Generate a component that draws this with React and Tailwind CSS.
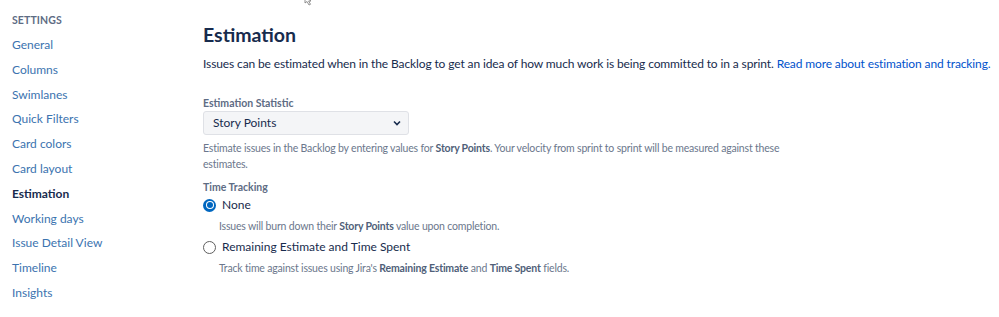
const navItems = [
  "General",
  "Columns",
  "Swimlanes",
  "Quick Filters",
  "Card colors",
  "Card layout",
  "Estimation",
  "Working days",
  "Issue Detail View",
  "Timeline",
  "Insights",
];

function Radio({ checked }) {
  return checked ? (
    <span className="w-[13px] h-[13px] rounded-full bg-[#0067c0] flex items-center justify-center shrink-0">
      <span className="w-[8px] h-[8px] rounded-full bg-white flex items-center justify-center">
        <span className="w-[6px] h-[6px] rounded-full bg-[#0067c0]" />
      </span>
    </span>
  ) : (
    <span className="w-[13px] h-[13px] rounded-full border border-[#5f5f5f] bg-white shrink-0" />
  );
}

export default function App() {
  return (
    <div
      className="relative w-[999px] h-[317px] bg-white flex overflow-hidden"
      style={{ fontFamily: 'Lato, "Open Sans", sans-serif' }}
    >
      {/* cursor */}
      <svg
        className="absolute left-[304px] top-[-4px]"
        width="10"
        height="10"
        viewBox="0 0 10 10"
      >
        <path d="M1 0 L1 7 L3 5.5 L5 9 L6.5 8.3 L4.6 5 L7 5 Z" fill="white" stroke="#777" strokeWidth="0.8" />
      </svg>

      {/* Sidebar */}
      <div className="w-[190px] shrink-0 pl-3 pt-[13px]">
        <div className="text-[10.5px] font-bold text-[#5e6c84] uppercase tracking-[0.1px] leading-[14px] mb-[6px]">
          Settings
        </div>
        <ul>
          {navItems.map((item) => (
            <li
              key={item}
              className={`text-[12px] leading-[24.8px] ${
                item === "Estimation"
                  ? "font-bold text-[#172b4d]"
                  : "text-[#3b73af]"
              }`}
            >
              {item}
            </li>
          ))}
        </ul>
      </div>

      {/* Content */}
      <div className="flex-1 pl-[13px] pt-[22px]">
        <h1 className="text-[19.5px] font-bold text-[#172b4d] leading-[26px] mb-[7px]">
          Estimation
        </h1>
        <p className="text-[12px] tracking-[-0.12px] text-[#172b4d] leading-[18px] whitespace-nowrap">
          Issues can be estimated when in the Backlog to get an idea of how much
          work is being committed to in a sprint.{" "}
          <span className="text-[#0052cc]">
            Read more about estimation and tracking.
          </span>
        </p>

        <div className="mt-[23px] text-[10.5px] font-bold text-[#5e6c84] leading-[14px]">
          Estimation Statistic
        </div>
        <div className="mt-[1px] w-[206px] h-[24px] bg-[#f4f5f7] border border-[#dfe1e6] rounded-[3px] flex items-center justify-between pl-[9px] pr-[6px]">
          <span className="text-[12px] text-[#172b4d]">Story Points</span>
          <svg width="10" height="10" viewBox="0 0 10 10">
            <path d="M2 3.5 L5 6.5 L8 3.5" fill="none" stroke="#172b4d" strokeWidth="1.6" />
          </svg>
        </div>
        <p className="mt-[5px] w-[584px] text-[10.5px] tracking-[-0.18px] text-[#6b778c] leading-[16px]">
          Estimate issues in the Backlog by entering values for{" "}
          <b className="font-bold text-[#505f79]">Story Points</b>. Your
          velocity from sprint to sprint will be measured against these
          estimates.
        </p>

        <div className="mt-[8px] text-[10.5px] font-bold text-[#5e6c84] leading-[14px]">
          Time Tracking
        </div>
        <div className="mt-[2px] flex items-center gap-[6px] pl-[0px] h-[18px]">
          <Radio checked />
          <span className="text-[12px] text-[#172b4d]">None</span>
        </div>
        <p className="mt-[4px] pl-[16px] text-[10.5px] tracking-[-0.18px] text-[#6b778c] leading-[16px]">
          Issues will burn down their{" "}
          <b className="font-bold text-[#505f79]">Story Points</b> value
          upon completion.
        </p>
        <div className="mt-[4px] flex items-center gap-[6px] h-[18px]">
          <Radio />
          <span className="text-[12px] text-[#172b4d]">
            Remaining Estimate and Time Spent
          </span>
        </div>
        <p className="mt-[4px] pl-[16px] text-[10.5px] tracking-[-0.18px] text-[#6b778c] leading-[16px]">
          Track time against issues using Jira's{" "}
          <b className="font-bold text-[#505f79]">Remaining Estimate</b> and{" "}
          <b className="font-bold text-[#505f79]">Time Spent</b> fields.
        </p>
      </div>
    </div>
  );
}
